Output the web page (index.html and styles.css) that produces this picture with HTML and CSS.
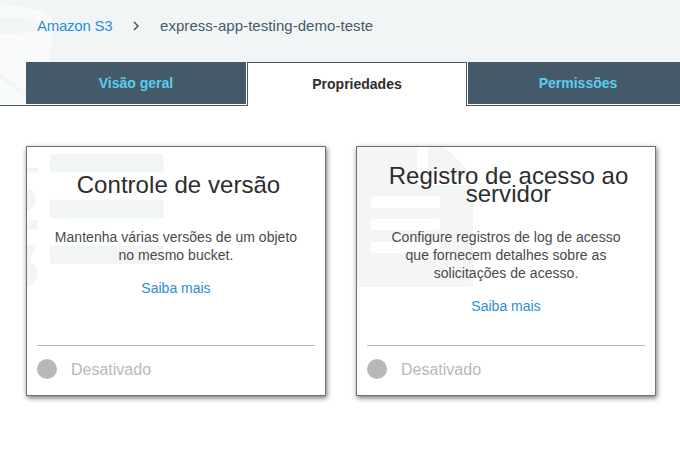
FILE: index.html
```html
<!DOCTYPE html>
<html lang="pt-BR">
<head>
<meta charset="utf-8">
<title>Amazon S3</title>
<link rel="stylesheet" href="styles.css">
</head>
<body>
<header class="header">
  <svg class="bucket" width="60" height="106" viewBox="0 0 60 106" aria-hidden="true">
    <path d="M0 5C30 5 54 13 54 24L49 62L42 106H0Z" fill="#f9fbfb"/>
    <path d="M0 17C22 17 39 20 39 26C39 31 22 34 0 34Z" fill="#f2f5f6"/>
    <path d="M0 76L30 98" stroke="#f2f5f6" stroke-width="5"/>
  </svg>
  <nav class="crumbs">
    <a class="crumb-link">Amazon S3</a>
    <svg class="chevron" width="6" height="10" viewBox="0 0 6 10"><path d="M1 1L5 5L1 9" fill="none" stroke="#444" stroke-width="1.3"/></svg>
    <span class="crumb-current">express-app-testing-demo-teste</span>
  </nav>
  <nav class="tabs">
    <div class="spacer"></div>
    <div class="tab overview"><span>Visão geral</span></div>
    <div class="tab active"><span>Propriedades</span></div>
    <div class="tab permissions"><span>Permissões</span></div>
  </nav>
</header>
<main class="cards">
  <section class="card">
    <svg class="art" width="150" height="150" viewBox="27 147 150 150" fill="#f2f5f6" aria-hidden="true">
      <rect x="50" y="154" width="113.500" height="18.500" rx="2"/>
      <rect x="50" y="199.700" width="113.500" height="18.500" rx="2"/>
      <rect x="50" y="245.400" width="113.500" height="18.500" rx="2"/>
      <path d="M27 168H38V172.500H27ZM27 190C33 189 36 194 36 200C36 206 31 209 27 211ZM27 224H29V220H38V230H27ZM27 245H36L30 262C35 264 37 269 37 274C37 281 32 286 27 287Z"/>
    </svg>
    <h2 class="title"><span>Controle de versão</span></h2>
    <p class="text"><span>Mantenha várias versões de um objeto</span><br><span>no mesmo bucket.</span></p>
    <a class="more">Saiba mais</a>
    <footer class="status"><i class="dot"></i><span>Desativado</span></footer>
  </section>
  <section class="card">
    <svg class="art" width="150" height="150" viewBox="357 147 150 150" aria-hidden="true">
      <path d="M357 147H417V185H473V283Q473 287 469 287H357ZM428 147H445L473 175H428Z" fill="#f4f6f6"/>
      <g fill="#fff">
        <rect x="371" y="196" width="69" height="12" rx="2"/>
        <rect x="371" y="219" width="69" height="11" rx="2"/>
        <rect x="371" y="242" width="69" height="11" rx="2"/>
      </g>
    </svg>
    <h2 class="title"><span>Registro de acesso ao</span><span>servidor</span></h2>
    <p class="text"><span>Configure registros de log de acesso</span><br><span>que fornecem detalhes sobre as</span><br><span>solicitações de acesso.</span></p>
    <a class="more">Saiba mais</a>
    <footer class="status"><i class="dot"></i><span>Desativado</span></footer>
  </section>
</main>
</body>
</html>
```

FILE: styles.css
```css
* { box-sizing: border-box; }
body { margin: 0; width: 680px; height: 454px; overflow: hidden; background: #fff; font: 14px/18px "Liberation Sans", Arial, sans-serif; color: #4a4a4a; }
.header { position: relative; height: 106px; background: #f2f5f6; }
.bucket { position: absolute; left: 0; top: 0; }
.crumbs { position: relative; display: flex; align-items: center; height: 62px; padding: 0 0 10px 37px; font-size: 15px; }
.crumb-link { width: 96px; color: #2a8fd8; letter-spacing: -0.25px; }
.chevron { margin-right: 21px; }
.crumb-current { color: #455a69; white-space: nowrap; letter-spacing: 0.05px; }
.tabs { position: relative; display: grid; grid-template-columns: 26px 221px 220px 213px; height: 44px; }
.spacer { border-bottom: 1px solid #455a69; }
.tab { display: flex; align-items: center; justify-content: center; font-weight: bold; color: #5bcdf1; border-bottom: 1px solid #455a69; }
.overview, .permissions { background: linear-gradient(#455a69, #455a69) 0 0 / 220px 42px no-repeat #fff; padding-bottom: 1px; }
.overview { padding-right: 1px; }
.permissions { background-position: 1px 0; padding-left: 9px; }
.active { background: #fff; color: #2d2d2d; border: 1px solid #455a69; border-bottom: 0; padding-bottom: 1px; }
.cards { display: flex; gap: 30px; padding: 40px 0 0 26px; }
.card { position: relative; width: 300px; height: 250px; flex: none; border: 1px solid #6f7273; background: #fff; box-shadow: 1px 2px 5px rgba(0,0,0,.55); padding: 20px 10px 0; display: flex; flex-direction: column; align-items: center; text-align: center; }
.art { position: absolute; left: 0; top: 0; }
.title, .text, .more { position: relative; white-space: nowrap; }
.title { margin: 0; height: 36px; padding-left: 5px; display: flex; flex-direction: column; justify-content: center; align-items: center; font-weight: normal; font-size: 24px; line-height: 18px; letter-spacing: 0.04px; color: #2d2d2d; }
.text { margin: 25px 0 15px; letter-spacing: 0.03px; }
.more { color: #2a8fd8; }
.status { width: 278px; height: 50px; margin-top: auto; border-top: 1px solid #b7b9b9; display: flex; align-items: center; font-size: 16px; color: #b7b9b9; padding-bottom: 2px; }
.dot { width: 20px; height: 20px; border-radius: 50%; background: #b7b9b9; margin: 0 14px 2px 0; }
```
